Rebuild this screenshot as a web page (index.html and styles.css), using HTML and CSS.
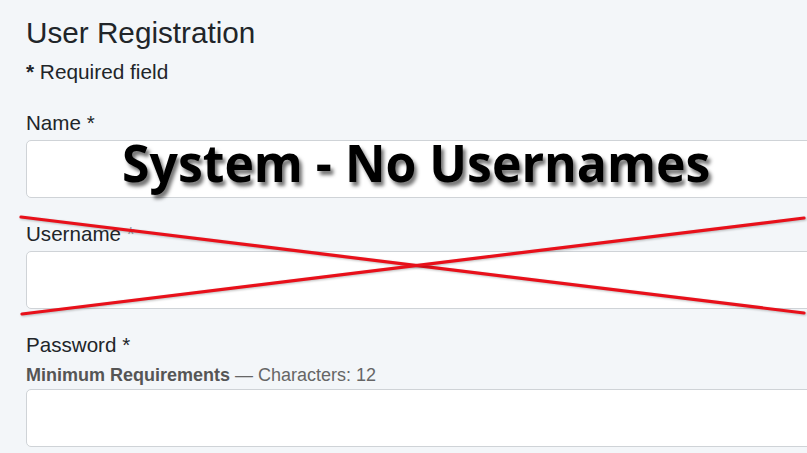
FILE: index.html
```html
<!DOCTYPE html>
<html lang="en">
<head>
    <meta charset="UTF-8">
    <meta name="viewport" content="width=device-width, initial-scale=1.0">
    <title>User Registration</title>
    <link rel="stylesheet" href="styles.css">
</head>
<body>
    <div class="page">
        <h1 class="title">User Registration</h1>
        <p class="required-note"><span class="star">*</span> Required field</p>

        <form class="reg-form">
            <div class="field field-first">
                <label class="field-label" for="name">Name *</label>
                <input class="field-input" id="name" type="text">
            </div>

            <div class="field">
                <label class="field-label" for="username">Username <span class="faded">*</span></label>
                <input class="field-input" id="username" type="text">
            </div>

            <div class="field">
                <label class="field-label" for="password">Password *</label>
                <div class="hint"><strong>Minimum Requirements</strong> &mdash; Characters: 12</div>
                <input class="field-input" id="password" type="password">
            </div>
        </form>

        <!-- annotation layered over the screenshot -->
        <div class="banner">System - No Usernames</div>

        <svg class="cross" width="807" height="453" viewBox="0 0 807 453">
            <line x1="21" y1="217" x2="804" y2="313" />
            <line x1="22" y1="314" x2="804" y2="218" />
        </svg>
    </div>
</body>
</html>
```

FILE: styles.css
```css
html, body {
    margin: 0;
    padding: 0;
}

body {
    background-color: #f3f6f9;
    font-family: "Liberation Sans", Arial, sans-serif;
    color: #212529;
    overflow: hidden;
}

.page {
    position: relative;
    width: 807px;
    height: 453px;
    padding-left: 26px;
    box-sizing: border-box;
    overflow: hidden;
}

.title {
    margin: 16px 0 0;
    font-size: 29.7px;
    line-height: 34px;
    font-weight: 400;
}

.required-note {
    margin: 10px 0 0;
    font-size: 20.8px;
    line-height: 24px;
}

.star {
    font-weight: 700;
}

.reg-form {
    width: 900px;
}

.field {
    margin-top: 23px;
}

.field-first {
    margin-top: 26px;
}

.field-label {
    display: block;
    padding-top: 1px;
    margin-bottom: 5px;
    font-size: 20.6px;
    line-height: 24px;
}

.faded {
    color: #9aa0a6;
}

.hint {
    margin-top: 8px;
    margin-bottom: 3px;
    font-size: 18px;
    line-height: 21px;
    color: #666;
}

.hint strong {
    color: #555;
}

.field-input {
    display: block;
    width: 100%;
    height: 58px;
    box-sizing: border-box;
    border: 1px solid #cfd3d7;
    border-radius: 5px;
    background: #fff;
    font-size: 18px;
}

.banner {
    position: absolute;
    left: 122px;
    top: 127px;
    font-family: "Open Sans", sans-serif;
    font-weight: 700;
    font-size: 52px;
    line-height: 70px;
    color: #000;
    white-space: nowrap;
    transform: scaleX(0.96);
    transform-origin: left center;
    text-shadow: 3px 4px 4px rgba(0, 0, 0, 0.55);
}

.cross {
    position: absolute;
    left: 0;
    top: 0;
    pointer-events: none;
}

.cross line {
    stroke: #e8101a;
    stroke-width: 3.2;
    stroke-linecap: round;
    filter: drop-shadow(1px 1px 1px rgba(0, 0, 0, 0.25));
}
```
